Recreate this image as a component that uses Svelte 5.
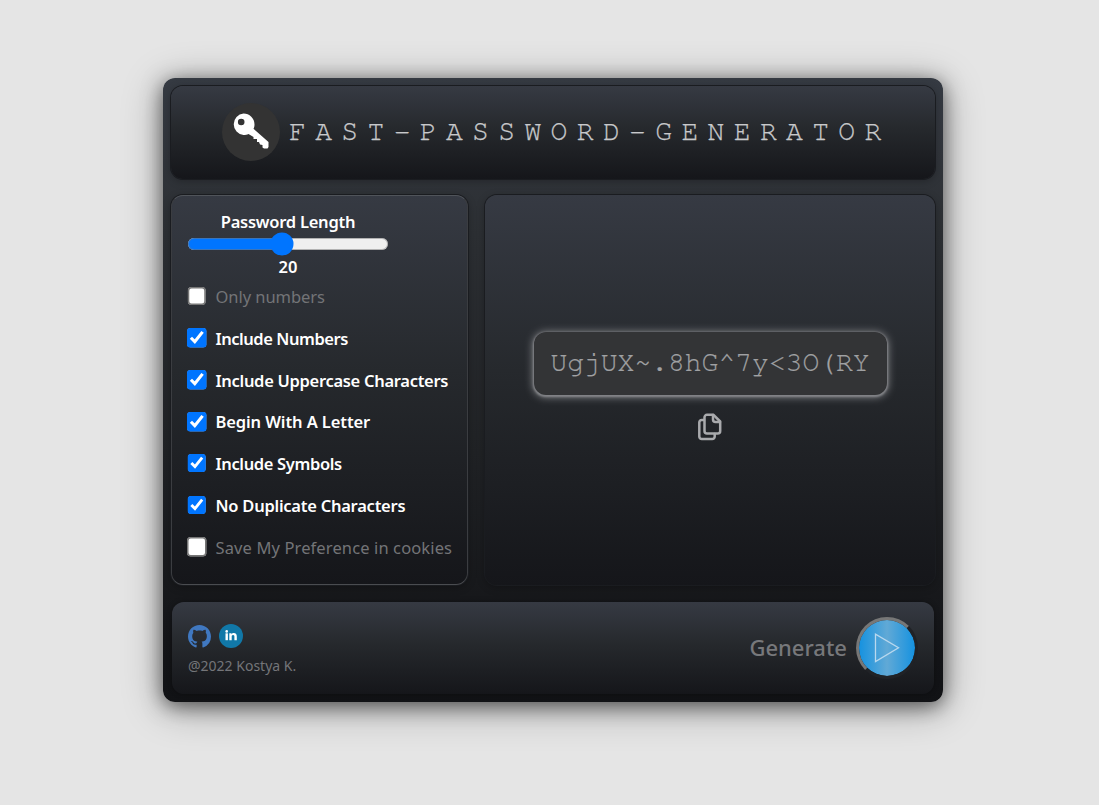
<script>
  const options = [
    { label: 'Only numbers', checked: false, spacing: -0.05 },
    { label: 'Include Numbers', checked: true, spacing: -0.45 },
    { label: 'Include Uppercase Characters', checked: true, spacing: -0.3 },
    { label: 'Begin With A Letter', checked: true, spacing: -0.1 },
    { label: 'Include Symbols', checked: true, spacing: -0.35 },
    { label: 'No Duplicate Characters', checked: true, spacing: -0.25 },
    { label: 'Save My Preference in cookies', checked: false, spacing: 0.12 }
  ];
  const password = 'UgjUX~.8hG^7y<3O(RY';
</script>

<div class="page">
  <main class="app">
    <header class="panel header">
      <span class="logo">
        <svg width="58" height="58" viewBox="0 0 58 58">
          <path fill="#fff" fill-rule="evenodd" d="M21.500 10.500a11 11 0 0 1 11 11c0 2-.4 3.100-1 4.300L46.500 39V44L45.500 45.500H42L40.500 44.500V42L38 41.500L37 39H35V36H31.500V34L26.500 31C25 31.700 23.500 32 21.500 32A10.800 10.800 0 0 1 21.500 10.500ZM19.200 15.700a3.300 3.300 0 1 0 0 6.600 3.300 3.300 0 1 0 0-6.600Z" />
        </svg>
      </span>
      <h1>FAST-PASSWORD-GENERATOR</h1>
    </header>

    <div class="middle">
      <section class="panel settings">
        <div class="length">
          <label for="len">Password Length</label>
          <input id="len" type="range" min="6" max="36" value="20" />
          <span class="value">20</span>
        </div>
        <ul>
          {#each options as o}
            <li>
              <label class:off={!o.checked} style="letter-spacing: {o.spacing}px">
                <input type="checkbox" checked={o.checked} />
                <span>{o.label}</span>
              </label>
            </li>
          {/each}
        </ul>
      </section>

      <section class="panel result">
        <output>{password}</output>
        <button class="copy" aria-label="Copy">
          <svg width="26" height="28" viewBox="0 0 26 28" fill="none" stroke="#a9aaad" stroke-width="2.500" stroke-linejoin="round" stroke-linecap="round">
            <path d="M10 1.800H16.500L23.200 8.500V18a2.500 2.500 0 0 1-2.500 2.500H10A2.500 2.500 0 0 1 7.500 18V4.300A2.500 2.500 0 0 1 10 1.800Z" />
            <path d="M16 2V6.500a2.500 2.500 0 0 0 2.500 2.500H23" />
            <path d="M7 7H4.800A2.500 2.500 0 0 0 2.300 9.500V23.500A2.500 2.500 0 0 0 4.800 26H15.200A2.500 2.500 0 0 0 17.700 23.500V21" />
          </svg>
        </button>
      </section>
    </div>

    <footer class="panel footer">
      <div class="about">
        <div class="links">
          <svg width="23" height="23" viewBox="0 0 16 16" fill="#4078c0"><path d="M8 0C3.580 0 0 3.580 0 8c0 3.540 2.290 6.530 5.470 7.590.4.070.55-.17.55-.38 0-.19-.01-.82-.01-1.490-2.010.37-2.530-.49-2.690-.94-.09-.23-.48-.94-.82-1.130-.28-.15-.68-.52-.01-.53.63-.01 1.080.58 1.230.82.72 1.210 1.870.87 2.330.66.07-.52.28-.87.51-1.070-1.780-.2-3.640-.89-3.640-3.950 0-.87.31-1.590.82-2.150-.08-.2-.36-1.020.08-2.120 0 0 .67-.21 2.200.82.64-.18 1.320-.27 2-.27s1.360.09 2 .27c1.530-1.040 2.200-.82 2.200-.82.44 1.100.16 1.920.08 2.120.51.56.82 1.270.82 2.150 0 3.070-1.870 3.750-3.650 3.950.29.25.54.73.54 1.480 0 1.070-.01 1.930-.01 2.200 0 .21.15.46.55.38A8.010 8.010 0 0 0 16 8c0-4.420-3.580-8-8-8Z" /></svg>
          <svg width="24" height="24" viewBox="0 0 24 24">
            <circle cx="12" cy="12" r="12" fill="#1178a8" />
            <g fill="#fff"><circle cx="7.700" cy="7.400" r="1.300" /><rect x="6.500" y="9.300" width="2.400" height="6.900" /><path d="M10.300 9.300H12.500V10.300C13 9.400 13.800 9.100 14.700 9.100C17 9.100 17.800 10.500 17.800 12.400V16.200H15.400V12.800C15.400 11.800 15.200 11 14.100 11C12.800 11 12.700 11.900 12.700 12.800V16.200H10.300Z" /></g>
          </svg>
        </div>
        <p>@2022 Kostya K.</p>
      </div>
      <div class="generate">
        <span>Generate</span>
        <button aria-label="Generate">
          <svg width="26" height="32" viewBox="0 0 26 32"><path d="M1.500 2.200V29.500L24.500 15.800Z" fill="none" stroke="#b9d8ee" stroke-width="1.300" /></svg>
        </button>
      </div>
    </footer>
  </main>
</div>

<style>
  :global(body) { background: #e5e5e5; }
  * { box-sizing: border-box; }
  .page { min-height: 100vh; padding: 78px 0 0 163px; overflow: hidden; }
  .app {
    width: 780px; height: 624px; padding: 8px;
    display: flex; flex-direction: column;
    border-radius: 12px;
    background: linear-gradient(180deg, #353a42 0%, #2c2f33 25%, #202225 60%, #141518 90%, #111215 100%);
    box-shadow: 0 4px 20px rgba(0, 0, 0, .55), 0 6px 42px rgba(0, 0, 0, .32);
    font-family: "Noto Sans", "Open Sans", sans-serif;
    color: #fff;
  }
  .panel {
    border-radius: 12px;
    background: linear-gradient(180deg, #363a43 0%, #26292d 45%, #15161a 100%);
    box-shadow: 0 0 0 1px #1a1c20, 0 2px 8px rgba(0, 0, 0, .28);
  }
  .header { height: 93px; display: flex; align-items: center; padding: 0 0 2px 51px; }
  .logo { width: 58px; height: 58px; border-radius: 50%; background: #333; display: block; margin-right: 9px; }
  h1 {
    margin: 0; font: 400 28px/32px FreeMono, "Courier New", "Liberation Mono", monospace;
    letter-spacing: 9.360px; color: #c8c9cb; white-space: nowrap; -webkit-text-stroke: .25px #c8c9cb;
  }
  .middle { display: flex; gap: 17px; margin-top: 16px; height: 390px; }
  .settings { width: 297px; padding: 15px 15px; border: 1px solid #4a4c50; border-top-color: #50545a; border-left-color: #3b3d41; border-right-color: #3b3d41; }
  .length { width: 202px; display: flex; flex-direction: column; align-items: center; font-weight: 600; font-size: 16.500px; }
  .length label { line-height: 22px; letter-spacing: -.25px; }
  .length input { width: 134.600px; height: 16px; margin: -.5px 0; zoom: 1.5; accent-color: #0075ff; }
  .value { line-height: 22px; height: 24px; }
  ul { list-style: none; margin: 6px 0 0; padding: 0; display: flex; flex-direction: column; gap: 17.800px; }
  li label { display: flex; align-items: center; height: 24px; font-size: 16.500px; font-weight: 600; line-height: 24px; white-space: nowrap; }
  li span { margin-top: -1px; }
  li label.off { color: #737477; font-weight: 400; }
  li input { width: 13px; height: 13px; margin: 0 6px 1.500px 0; zoom: 1.5; flex: none; accent-color: #0075ff; }
  .result { flex: 1; display: flex; flex-direction: column; align-items: center; padding-top: 137px; }
  output {
    width: 353px; height: 63px; display: block; border-radius: 12px; background: #333436;
    box-shadow: 0 1px 2px 1px #828387, 0 1px 9px 1px #85868a;
    font: 400 28px/62px FreeMono, "Courier New", "Liberation Mono", monospace;
    text-align: center; color: #a0a1a3; -webkit-text-stroke: .2px #a0a1a3;
  }
  button { border: 0; padding: 0; background: none; }
  .copy { margin-top: 18px; height: 28px; width: 26px; }
  svg { display: block; }
  .footer { height: 92px; margin: 17px 1px 0; display: flex; justify-content: space-between; padding: 0 16px; box-shadow: 0 0 5px rgba(0, 0, 0, .35); }
  .about { padding-top: 22px; }
  .links { display: flex; align-items: center; gap: 8px; }
  p { margin: 8px 0 0; font-size: 14px; line-height: 20px; color: #747579; }
  .generate { display: flex; align-items: center; gap: 9px; font-size: 22px; font-weight: 500; color: #77787b; }
  .generate span { margin-top: -2px; }
  .generate button {
    width: 62px; height: 62px; border-radius: 50%; border: 3px solid; border-color: #777 #202226 #202226 #777;
    background: linear-gradient(90deg, #1592e0, #61a9d6 50%, #1592e0) padding-box; display: flex; align-items: center; justify-content: center;
  }
</style>
